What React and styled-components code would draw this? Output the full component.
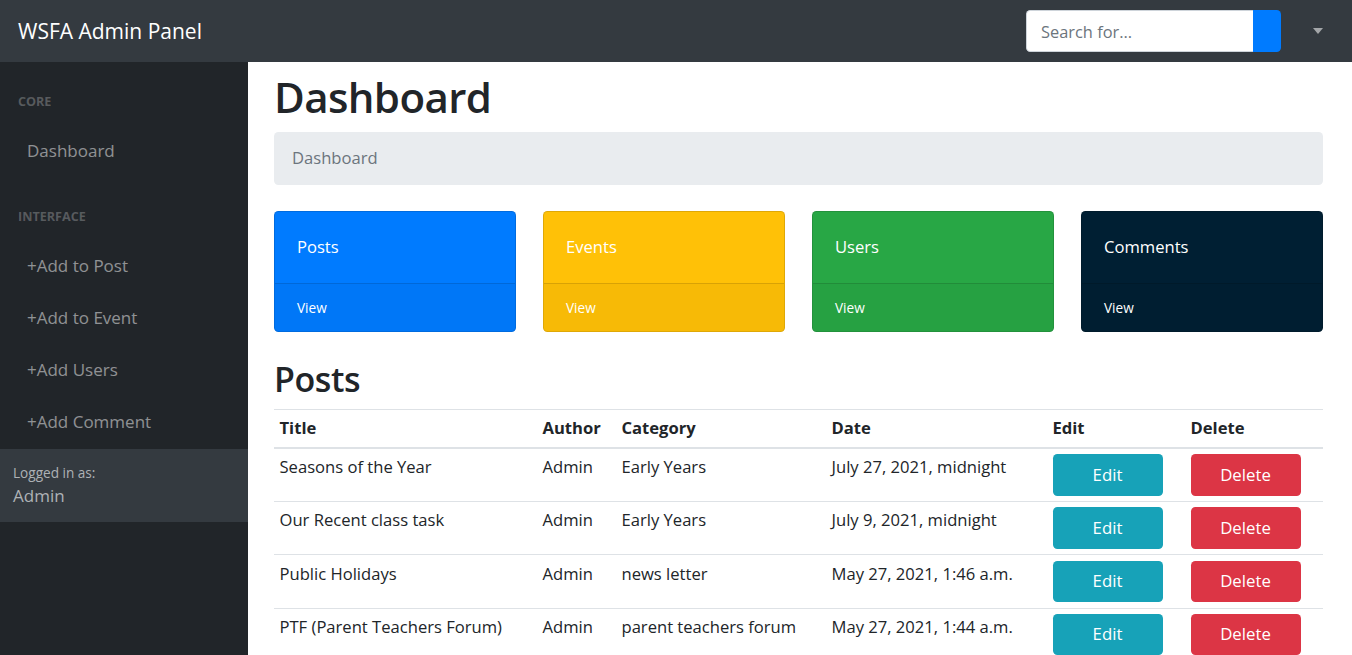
import React from 'react';
import styled, { createGlobalStyle } from 'styled-components';

const GlobalStyle = createGlobalStyle`
  * { box-sizing: border-box; }
  html, body {
    margin: 0;
    height: 655px;
    overflow: hidden;
  }
  body {
    font-family: "Open Sans", "Noto Sans", sans-serif;
    font-size: 16.6px;
    line-height: 26.4px;
    color: #212529;
    background: #fff;
  }
`;

const Topbar = styled.nav`
  height: 62px;
  background: #343a40;
  display: flex;
  align-items: center;
  padding-left: 18px;
`;

const Brand = styled.a`
  color: #fff;
  font-size: 21px;
  line-height: 1;
  text-decoration: none;
`;

const SearchGroup = styled.form`
  margin-left: auto;
  display: flex;
  height: 42px;
`;

const SearchInput = styled.input`
  width: 227px;
  height: 100%;
  border: 1px solid #ced4da;
  border-right: 0;
  border-radius: 4.4px 0 0 4.4px;
  padding: 0 14px;
  font: inherit;
  font-size: 16.4px;
  color: #495057;
  outline: none;
  &::placeholder { color: #6c757d; }
`;

const SearchButton = styled.button`
  width: 28px;
  height: 100%;
  border: 0;
  border-radius: 0 4.4px 4.4px 0;
  background: #007bff;
`;

const UserToggle = styled.a`
  display: flex;
  align-items: center;
  padding: 0 29px 0 32px;
  &::after {
    content: "";
    border-top: 6px solid rgba(255, 255, 255, 0.55);
    border-left: 5.5px solid transparent;
    border-right: 5.5px solid transparent;
  }
`;

const Layout = styled.div`
  display: grid;
  grid-template-columns: 248px 1fr;
  height: calc(655px - 62px);
`;

const Sidenav = styled.aside`
  background: #212529;
  display: flex;
  flex-direction: column;
`;

const MenuHeading = styled.div`
  padding: 30px 18px 13px;
  font-size: 12.6px;
  line-height: 20px;
  font-weight: 700;
  text-transform: uppercase;
  color: rgba(255, 255, 255, 0.25);
`;

const NavLink = styled.a`
  display: block;
  padding: 13px 27px;
  line-height: 26px;
  font-size: 17px;
  color: rgba(255, 255, 255, 0.5);
  text-decoration: none;
`;

const SideFooter = styled.div`
  margin-top: 1px;
  background: #343a40;
  padding: 13px 13px;
  color: #aeb2b6;
`;

const FooterSmall = styled.div`
  font-size: 13.6px;
  line-height: 21px;
`;

const FooterName = styled.div`
  font-size: 17px;
  line-height: 26.4px;
`;

const Main = styled.main`
  padding: 0 29px 0 26px;
  overflow: hidden;
`;

const PageTitle = styled.h1`
  margin: 8px 0 9px;
  font-size: 42px;
  line-height: 53px;
  font-weight: 600;
  letter-spacing: -0.6px;
`;

const Breadcrumb = styled.div`
  background: #e9ecef;
  border-radius: 4.4px;
  padding: 13.2px 18px;
  line-height: 26.4px;
  color: #6c757d;
  margin-bottom: 26.4px;
`;

const CardGrid = styled.div`
  display: grid;
  grid-template-columns: repeat(4, 1fr);
  gap: 27px;
  margin-bottom: 26px;
`;

const Card = styled.div`
  background: ${(p) => p.$bg};
  border: 1px solid rgba(0, 0, 0, 0.125);
  border-radius: 4.4px;
  color: #fff;
  overflow: hidden;
`;

const CardBody = styled.div`
  padding: 22px;
  line-height: 26.4px;
`;

const CardFooter = styled.div`
  background: rgba(0, 0, 0, 0.03);
  border-top: 1px solid rgba(0, 0, 0, 0.125);
  padding: 13px 22px;
  font-size: 13.6px;
  line-height: 21.6px;
`;

const SectionTitle = styled.h2`
  margin: 0 0 8.8px;
  font-size: 34px;
  line-height: 42px;
  font-weight: 600;
  letter-spacing: -0.4px;
`;

const Table = styled.table`
  width: 100%;
  border-collapse: collapse;
  table-layout: fixed;

  th, td {
    text-align: left;
    vertical-align: top;
    padding: 5.3px 5.5px;
    line-height: 26.4px;
    border-top: 1px solid #dee2e6;
    white-space: nowrap;
  }
  th { font-weight: 700; }
  thead th { border-bottom: 2px solid #dee2e6; }
`;

const ActionButton = styled.button`
  width: 110px;
  height: 41.6px;
  border: 0;
  border-radius: 4.4px;
  background: ${(p) => (p.$danger ? '#dc3545' : '#17a2b8')};
  color: #fff;
  font: inherit;
  font-size: 16.8px;
`;

const cards = [
  { label: 'Posts', bg: '#007bff' },
  { label: 'Events', bg: '#ffc107' },
  { label: 'Users', bg: '#28a745' },
  { label: 'Comments', bg: '#001f33' },
];

const posts = [
  ['Seasons of the Year', 'Early Years', 'July 27, 2021, midnight'],
  ['Our Recent class task', 'Early Years', 'July 9, 2021, midnight'],
  ['Public Holidays', 'news letter', 'May 27, 2021, 1:46 a.m.'],
  ['PTF (Parent Teachers Forum)', 'parent teachers forum', 'May 27, 2021, 1:44 a.m.'],
];

const App = () => {
  return (
    <>
      <GlobalStyle />
      <Topbar>
        <Brand href="#">WSFA Admin Panel</Brand>
        <SearchGroup onSubmit={(e) => e.preventDefault()}>
          <SearchInput placeholder="Search for..." />
          <SearchButton type="submit" />
        </SearchGroup>
        <UserToggle href="#" />
      </Topbar>
      <Layout>
        <Sidenav>
          <MenuHeading>Core</MenuHeading>
          <NavLink href="#">Dashboard</NavLink>
          <MenuHeading>Interface</MenuHeading>
          <NavLink href="#">+Add to Post</NavLink>
          <NavLink href="#">+Add to Event</NavLink>
          <NavLink href="#">+Add Users</NavLink>
          <NavLink href="#">+Add Comment</NavLink>
          <SideFooter>
            <FooterSmall>Logged in as:</FooterSmall>
            <FooterName>Admin</FooterName>
          </SideFooter>
        </Sidenav>
        <Main>
          <PageTitle>Dashboard</PageTitle>
          <Breadcrumb>Dashboard</Breadcrumb>
          <CardGrid>
            {cards.map((c) => (
              <Card key={c.label} $bg={c.bg}>
                <CardBody>{c.label}</CardBody>
                <CardFooter>View</CardFooter>
              </Card>
            ))}
          </CardGrid>
          <SectionTitle>Posts</SectionTitle>
          <Table>
            <colgroup>
              <col style={{ width: 263 }} />
              <col style={{ width: 79 }} />
              <col style={{ width: 210 }} />
              <col style={{ width: 221 }} />
              <col style={{ width: 138 }} />
              <col style={{ width: 138 }} />
            </colgroup>
            <thead>
              <tr>
                <th>Title</th>
                <th>Author</th>
                <th>Category</th>
                <th>Date</th>
                <th>Edit</th>
                <th>Delete</th>
              </tr>
            </thead>
            <tbody>
              {posts.map(([title, category, date]) => (
                <tr key={title}>
                  <td>{title}</td>
                  <td>Admin</td>
                  <td>{category}</td>
                  <td>{date}</td>
                  <td><ActionButton>Edit</ActionButton></td>
                  <td><ActionButton $danger>Delete</ActionButton></td>
                </tr>
              ))}
            </tbody>
          </Table>
        </Main>
      </Layout>
    </>
  );
};

export default App;
